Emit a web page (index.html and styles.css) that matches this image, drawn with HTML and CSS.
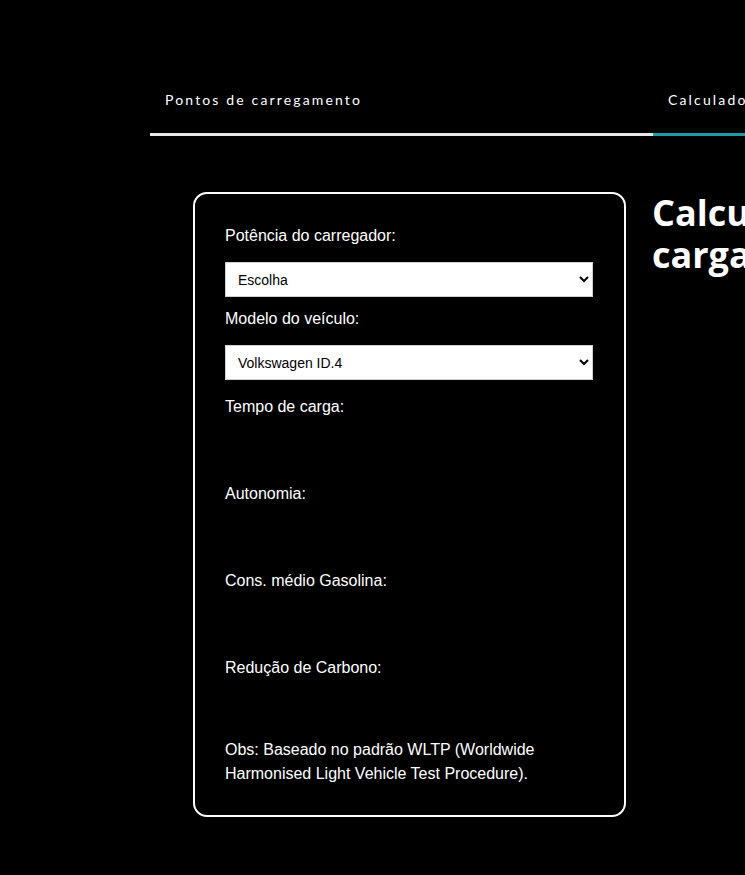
FILE: index.html
```html
<!DOCTYPE html>
<html lang="pt">
<head>
<meta charset="utf-8">
<title>Calculadora de carga</title>
<link rel="stylesheet" href="styles.css">
</head>
<body>
<div class="page">
  <nav class="tabs">
    <div class="tab">Pontos de carregamento</div>
    <div class="tab tab-active">Calculadora de carga</div>
  </nav>
  <main class="main">
    <section class="card">
      <label class="label label-first" for="pot">Potência do carregador:</label>
      <select class="select" id="pot">
        <option>Escolha</option>
      </select>
      <label class="label label-second" for="mod">Modelo do veículo:</label>
      <select class="select" id="mod">
        <option>Volkswagen ID.4</option>
      </select>
      <div class="result result-first">Tempo de carga:</div>
      <div class="result">Autonomia:</div>
      <div class="result">Cons. médio Gasolina:</div>
      <div class="result result-last">Redução de Carbono:</div>
      <p class="obs">Obs: Baseado no padrão WLTP (Worldwide Harmonised Light Vehicle Test Procedure).</p>
    </section>
    <h1 class="title">Calculadora de carga</h1>
  </main>
</div>
</body>
</html>
```

FILE: styles.css
```css
html, body {
  margin: 0;
  padding: 0;
  background: #000;
  color: #fff;
  overflow: hidden;
}
.page {
  width: 1200px;
  height: 875px;
}
.tabs {
  display: flex;
  margin-left: 150px;
  padding-top: 90px;
}
.tab {
  width: 503px;
  box-sizing: border-box;
  padding: 0 0 23px 15px;
  font-family: Lato, "Open Sans", sans-serif;
  font-size: 14px;
  line-height: 20px;
  letter-spacing: 2.15px;
  color: #fff;
  border-bottom: 3px solid #e8e8e8;
}
.tab-active {
  border-bottom-color: #1c9ea5;
}
.main {
  display: flex;
  align-items: flex-start;
  margin-top: 56px;
  margin-left: 193px;
  gap: 26px;
}
.card {
  width: 433px;
  box-sizing: border-box;
  border: 2px solid #fff;
  border-radius: 14px;
  padding: 30px 31px 29px 30px;
  display: flex;
  flex-direction: column;
  font-family: "Liberation Sans", Arial, sans-serif;
  font-size: 16px;
  line-height: 24px;
}
.label {
  display: block;
}
.label-second {
  margin-top: 10px;
}
.select {
  margin-top: 14px;
  height: 35px;
  width: 100%;
  background: #fff;
  color: #000;
  border: 1px solid #d0d0d0;
  border-radius: 0;
  padding: 0 8px 0 8px;
  font-family: "Liberation Sans", Arial, sans-serif;
  font-size: 14px;
}
.result {
  height: 87px;
}
.result-first {
  margin-top: 15px;
}
.result-last {
  height: 82px;
}
.obs {
  margin: 0;
}
.title {
  margin: 0;
  width: 300px;
  flex: none;
  font-family: "Open Sans", sans-serif;
  font-weight: 700;
  font-size: 36px;
  line-height: 42px;
  color: #fff;
}
```
